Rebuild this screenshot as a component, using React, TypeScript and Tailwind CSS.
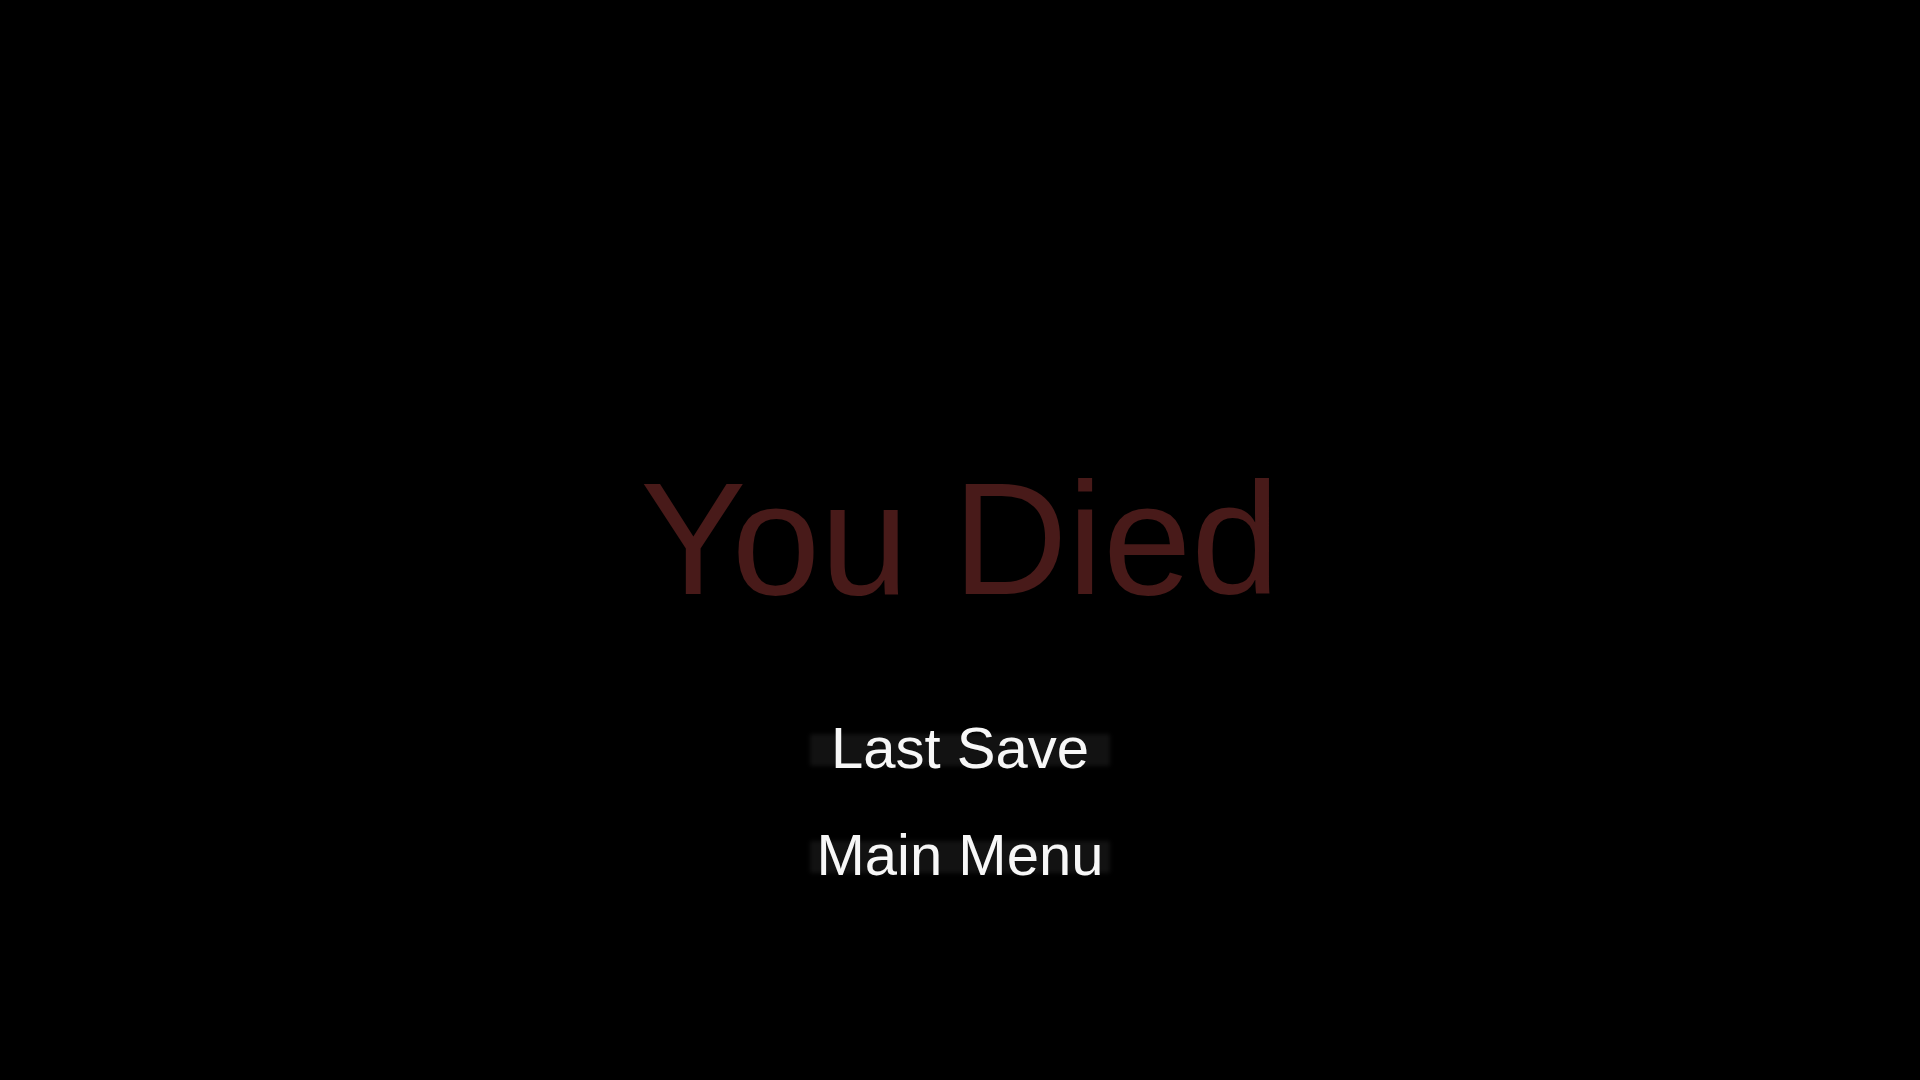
const MenuButton = ({ label }: { label: string }) => {
   return (
      <button className="relative flex h-[58px] w-[300px] items-start justify-center">
         <span className="absolute left-0 top-[15px] h-[32px] w-[300px] rounded-[2px] bg-[#121212] blur-[2px]" />
         <span className="relative text-[58px] leading-none text-[#f7f7f7]">{label}</span>
      </button>
   );
};

const App = () => {
   return (
      <main
         className="flex min-h-screen w-full flex-col items-center bg-black pt-[460px]"
         style={{ fontFamily: '"Liberation Sans", Arial, sans-serif' }}
      >
         <h1 className="text-[159px] font-normal leading-none text-[#481a19]">You Died</h1>
         <div className="mt-[100px] flex flex-col items-center gap-[49px]">
            <MenuButton label="Last Save" />
            <MenuButton label="Main Menu" />
         </div>
      </main>
   );
};

export default App;
